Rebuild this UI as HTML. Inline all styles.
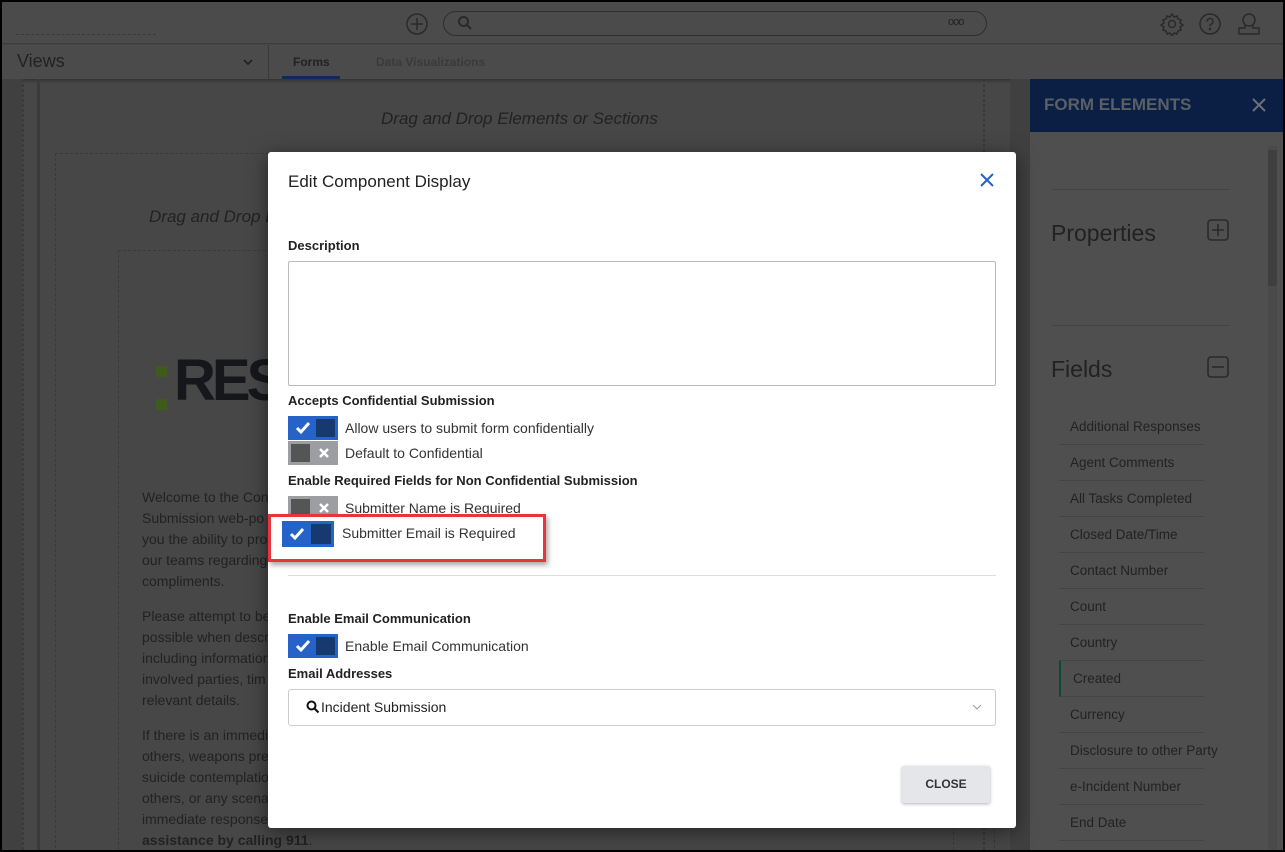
<!DOCTYPE html>
<html><head><meta charset="utf-8"><style>
*{box-sizing:border-box;margin:0;padding:0}
body{width:1285px;height:852px;overflow:hidden;background:#000;font-family:"Liberation Sans",sans-serif;position:relative}
.abs{position:absolute}
.frame{left:2px;top:2px;width:1281px;height:848px;background:#474747;overflow:hidden}
.top{left:0;top:0;width:1281px;height:42px;background:#4b4b4b;border-bottom:1px solid #3c3c3c}
.sub{left:0;top:43px;width:1281px;height:34px;background:#4b4b4b;box-shadow:0 2px 3px rgba(0,0,0,.3)}
.t{color:#222}
.dash{border:1px dashed #3a3a3a}
.field{position:absolute;left:1057px;width:145px;border-bottom:1px solid #444;height:36px;font-size:13.5px;color:#222;padding:10px 0 0 11px;white-space:nowrap}
.modal{left:268px;top:152px;width:748px;height:676px;background:#fff;border-radius:3px;box-shadow:0 4px 20px rgba(0,0,0,.5)}
.lbl{position:absolute;left:20px;font-size:14px;font-weight:bold;color:#222}
.tg{position:absolute;width:50px;height:24px}
.tg.on{background:#2563c9}
.tg.on .k{position:absolute;right:3px;top:3px;width:19px;height:18px;background:#163a70}
.tg.off{background:#9c9ea2}
.tg.off .k{position:absolute;left:3px;top:3px;width:19px;height:18px;background:#555}
.tg svg{position:absolute;top:5px}
.tl{position:absolute;font-size:14px;color:#333}
</style></head><body>
<div class="abs frame">
 <div class="abs top">
  <svg class="abs" style="left:403px;top:10px" width="24" height="24" viewBox="0 0 24 24" fill="none" stroke="#2a2a2a" stroke-width="1.5"><circle cx="12" cy="12" r="10"/><path d="M12 6v12M6 12h12"/></svg>
  <div class="abs" style="left:441px;top:9px;width:544px;height:25px;border:1px solid #2e2e2e;border-radius:13px"></div>
  <svg class="abs" style="left:455px;top:13px" width="16" height="16" viewBox="0 0 16 16" fill="none" stroke="#2a2a2a" stroke-width="2"><circle cx="6.5" cy="6.5" r="4.5"/><path d="M10 10l4 4"/></svg>
  <div class="abs t" style="left:946px;top:14px;font-size:11px;letter-spacing:-1px">ooo</div>
  <svg class="abs" style="left:1158px;top:10px" width="24" height="24" viewBox="0 0 24 24" fill="none" stroke="#2a2a2a" stroke-width="1.5"><circle cx="12" cy="12" r="3.5"/><path d="M12 2l2 3 3-1 1 3 3 1-1 3 3 2-3 2 1 3-3 1-1 3-3-1-2 3-2-3-3 1-1-3-3-1 1-3-3-2 3-2-1-3 3-1 1-3 3 1z"/></svg>
  <svg class="abs" style="left:1196px;top:10px" width="24" height="24" viewBox="0 0 24 24" fill="none" stroke="#2a2a2a" stroke-width="1.5"><circle cx="12" cy="12" r="10"/><path d="M9 9.5a3 3 0 1 1 4 2.8c-.8.4-1 1-1 2"/><circle cx="12" cy="17" r=".6" fill="#2a2a2a"/></svg>
  <svg class="abs" style="left:1234px;top:9px" width="26" height="26" viewBox="0 0 26 26" fill="none" stroke="#2a2a2a" stroke-width="1.5"><circle cx="13" cy="9" r="6"/><path d="M9 14v3H3v6h20v-6h-6v-3"/></svg>
  <div class="abs" style="left:14px;top:32px;width:140px;border-top:1px dashed #3a3a3a"></div>
 </div>
 <div class="abs sub">
  <div class="abs t" style="left:15px;top:6px;font-size:18px">Views</div>
  <svg class="abs" style="left:240px;top:13px" width="12" height="8" viewBox="0 0 12 8" fill="none" stroke="#222" stroke-width="1.8"><path d="M2 2l4 4 4-4"/></svg>
  <div class="abs" style="left:266px;top:0;width:1px;height:34px;background:#3a3a3a"></div>
  <div class="abs t" style="left:291px;top:10px;font-size:12px;font-weight:bold">Forms</div>
  <div class="abs" style="left:280px;top:31px;width:58px;height:3px;background:#0e2a5c"></div>
  <div class="abs" style="left:374px;top:10px;font-size:12px;font-weight:bold;color:#3a3a3a">Data Visualizations</div>
 </div>
 <div class="abs" style="left:0;top:77px;width:20px;height:771px;background:#404040"></div>
 <div class="abs dash" style="left:20px;top:77px;width:0;height:771px"></div>
 <div class="abs" style="left:35px;top:77px;width:3px;height:771px;background:#3a3a3a"></div>
 <div class="abs dash" style="left:981px;top:77px;width:0;height:771px"></div>
 <div class="abs" style="left:1008px;top:77px;width:20px;height:771px;background:#404040"></div>
 <div class="abs t" style="left:379px;top:107px;font-size:17px;font-style:italic">Drag and Drop Elements or Sections</div>
 <div class="abs dash" style="left:53px;top:151px;width:940px;height:700px"></div>
 <div class="abs t" style="left:147px;top:205px;font-size:17px;font-style:italic">Drag and Drop Elements</div>
 <div class="abs dash" style="left:116px;top:248px;width:836px;height:610px"></div>
 <div class="abs" style="left:154px;top:364px;width:11px;height:11px;background:#3e5a1c"></div>
 <div class="abs" style="left:154px;top:397px;width:11px;height:11px;background:#3e5a1c"></div>
 <div class="abs" style="left:172px;top:350px;font-size:58px;font-weight:bold;color:#15171a;letter-spacing:-4px;line-height:1">RES</div>
 <div class="abs t" style="left:140px;top:485px;font-size:14px;line-height:21px;width:140px;white-space:nowrap">Welcome to the Con<br>Submission web-po<br>you the ability to pro<br>our teams regarding<br>compliments.</div>
 <div class="abs t" style="left:140px;top:604px;font-size:14px;line-height:21px;white-space:nowrap">Please attempt to be<br>possible when descr<br>including information<br>involved parties, tim<br>relevant details.</div>
 <div class="abs t" style="left:140px;top:723px;font-size:14px;line-height:21px;white-space:nowrap">If there is an immedi<br>others, weapons pre<br>suicide contemplatio<br>others, or any scena<br>immediate response<br><b>assistance by calling 911</b>.</div>
 <div class="abs" style="left:1028px;top:77px;width:253px;height:771px;background:#4f4f4f"></div>
 <div class="abs" style="left:1028px;top:77px;width:253px;height:53px;background:#0b1f45"></div>
 <div class="abs" style="left:1042px;top:93px;font-size:17px;font-weight:bold;color:#5a5f66">FORM ELEMENTS</div>
 <svg class="abs" style="left:1249px;top:95px" width="16" height="16" viewBox="0 0 16 16" stroke="#6a6f78" stroke-width="2"><path d="M2 2l12 12M14 2L2 14"/></svg>
 <div class="abs" style="left:1266px;top:144px;width:9px;height:704px;background:#4a4a4a"></div>
 <div class="abs" style="left:1266px;top:148px;width:9px;height:136px;background:#3f3f3f"></div>
 <div class="abs" style="left:1050px;top:187px;width:178px;border-top:1px solid #444"></div>
 <div class="abs t" style="left:1049px;top:218px;font-size:23px">Properties</div>
 <svg class="abs" style="left:1205px;top:217px" width="22" height="22" viewBox="0 0 22 22" fill="none" stroke="#2a2a2a" stroke-width="1.6"><rect x="1" y="1" width="20" height="20" rx="3"/><path d="M11 5v12M5 11h12"/></svg>
 <div class="abs" style="left:1050px;top:323px;width:178px;border-top:1px solid #444"></div>
 <div class="abs t" style="left:1049px;top:354px;font-size:23px">Fields</div>
 <svg class="abs" style="left:1205px;top:354px" width="22" height="22" viewBox="0 0 22 22" fill="none" stroke="#2a2a2a" stroke-width="1.6"><rect x="1" y="1" width="20" height="20" rx="3"/><path d="M5 11h12"/></svg>
 <div class="field" style="top:407px">Additional Responses</div>
 <div class="field" style="top:443px">Agent Comments</div>
 <div class="field" style="top:479px">All Tasks Completed</div>
 <div class="field" style="top:515px">Closed Date/Time</div>
 <div class="field" style="top:551px">Contact Number</div>
 <div class="field" style="top:587px">Count</div>
 <div class="field" style="top:623px">Country</div>
 <div class="field" style="top:659px;border-left:2px solid #0d4a36;padding-left:12px">Created</div>
 <div class="field" style="top:695px">Currency</div>
 <div class="field" style="top:731px">Disclosure to other Party</div>
 <div class="field" style="top:767px">e-Incident Number</div>
 <div class="field" style="top:803px">End Date</div>
</div>
<div class="abs modal">
 <div class="abs" style="left:20px;top:20px;font-size:17px;color:#222">Edit Component Display</div>
 <svg class="abs" style="left:712px;top:21px" width="14" height="14" viewBox="0 0 14 14" stroke="#2563c9" stroke-width="2"><path d="M1 1l12 12M13 1L1 13"/></svg>
 <div class="lbl" style="top:86px;font-size:13px">Description</div>
 <div class="abs" style="left:20px;top:109px;width:708px;height:125px;border:1px solid #bbb;border-radius:2px"></div>
 <div class="lbl" style="top:241px;font-size:13px">Accepts Confidential Submission</div>
 <div class="tg on" style="left:20px;top:264px"><svg style="left:7px" width="16" height="14" viewBox="0 0 16 14"><path d="M2 7l4 4 8-9" stroke="#fff" stroke-width="3" fill="none"/></svg><div class="k"></div></div>
 <div class="tl" style="left:77px;top:268px">Allow users to submit form confidentially</div>
 <div class="tg off" style="left:20px;top:289px"><div class="k"></div><svg style="left:31px;top:7px" width="10" height="10" viewBox="0 0 10 10"><path d="M1 1l8 8M9 1L1 9" stroke="#fff" stroke-width="2.5"/></svg></div>
 <div class="tl" style="left:77px;top:293px">Default to Confidential</div>
 <div class="lbl" style="top:321px;font-size:13px">Enable Required Fields for Non Confidential Submission</div>
 <div class="tg off" style="left:20px;top:344px"><div class="k"></div><svg style="left:31px;top:7px" width="10" height="10" viewBox="0 0 10 10"><path d="M1 1l8 8M9 1L1 9" stroke="#fff" stroke-width="2.5"/></svg></div>
 <div class="tl" style="left:77px;top:348px">Submitter Name is Required</div>
 <div class="abs" style="left:0;top:362px;width:278px;height:48px;border:3px solid #e8343c;background:#fff;box-shadow:2px 3px 5px rgba(0,0,0,.35)"></div>
 <div class="tg on" style="left:14px;top:369px;width:52px;height:26px"><svg style="left:7px;top:6px" width="16" height="14" viewBox="0 0 16 14"><path d="M2 7l4 4 8-9" stroke="#fff" stroke-width="3" fill="none"/></svg><div class="k" style="width:20px;height:20px"></div></div>
 <div class="tl" style="left:74px;top:373px">Submitter Email is Required</div>
 <div class="abs" style="left:20px;top:423px;width:708px;border-top:1px solid #ddd"></div>
 <div class="lbl" style="top:459px;font-size:13px">Enable Email Communication</div>
 <div class="tg on" style="left:20px;top:482px"><svg style="left:7px" width="16" height="14" viewBox="0 0 16 14"><path d="M2 7l4 4 8-9" stroke="#fff" stroke-width="3" fill="none"/></svg><div class="k"></div></div>
 <div class="tl" style="left:77px;top:486px">Enable Email Communication</div>
 <div class="lbl" style="top:514px;font-size:13px">Email Addresses</div>
 <div class="abs" style="left:20px;top:537px;width:708px;height:37px;border:1px solid #ccc;border-radius:3px"></div>
 <svg class="abs" style="left:38px;top:548px" width="14" height="14" viewBox="0 0 14 14" fill="none" stroke="#111" stroke-width="2"><circle cx="5.5" cy="5.5" r="4"/><path d="M8.5 8.5l4 4"/></svg>
 <div class="tl" style="left:53px;top:547px;color:#222">Incident Submission</div>
 <svg class="abs" style="left:704px;top:552px" width="10" height="6" viewBox="0 0 10 6" fill="none" stroke="#999" stroke-width="1"><path d="M1 1l4 4 4-4"/></svg>
 <div class="abs" style="left:634px;top:614px;width:88px;height:37px;background:#e4e6e9;border-radius:2px;box-shadow:0 1px 3px rgba(0,0,0,.3);font-size:12px;font-weight:bold;color:#333;text-align:center;line-height:37px">CLOSE</div>
</div>
</body></html>
